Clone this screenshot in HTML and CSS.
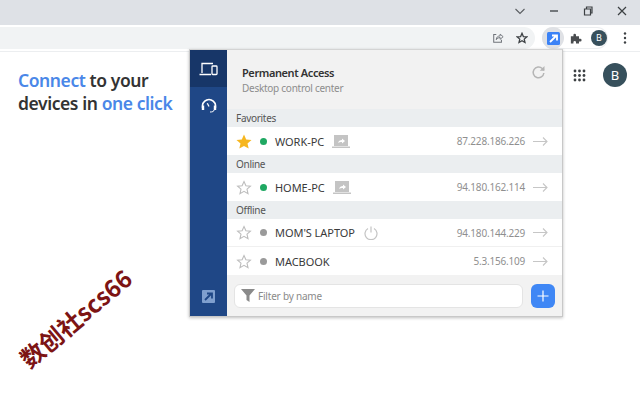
FILE: index.html
```html
<!DOCTYPE html>
<html lang="en">
<head>
<meta charset="utf-8">
<title>Permanent Access</title>
<link rel="stylesheet" href="styles.css">
</head>
<body>
<header class="titlebar">
  <svg class="win-icon" width="12" height="12" viewBox="0 0 12 12"><path d="M1.500 4 6 8.500 10.500 4" fill="none" stroke="#5a5d61" stroke-width="1.100"/></svg>
  <svg class="win-icon" width="12" height="12" viewBox="0 0 12 12"><path d="M2 6h8" fill="none" stroke="#3c4043" stroke-width="1.300"/></svg>
  <svg class="win-icon" width="12" height="12" viewBox="0 0 12 12"><path d="M2.500 4h6v6h-6zM4.500 4V2h5.500v6H8.500" fill="none" stroke="#3c4043" stroke-width="1.200"/></svg>
  <svg class="win-icon" width="12" height="12" viewBox="0 0 12 12"><path d="M2 2 10 10M10 2 2 10" fill="none" stroke="#3c4043" stroke-width="1.200"/></svg>
</header>
<nav class="toolbar">
  <div class="omnibox">
    <svg width="12" height="12" viewBox="0 0 14 14"><path d="M5 3H2v9h9V9" fill="none" stroke="#70747a" stroke-width="1.200"/><path d="M5 9c0-3 2-4.500 4.500-4.500V2.500L13 5.500 9.500 8.500V6.500C7.500 6.500 6 7.200 5 9z" fill="none" stroke="#70747a" stroke-width="1.100"/></svg>
    <svg width="12" height="12" viewBox="0 0 14 14"><path d="M7 1.500 8.600 5.300 12.700 5.600 9.600 8.300 10.500 12.300 7 10.200 3.500 12.300 4.400 8.300 1.300 5.600 5.400 5.300z" fill="none" stroke="#3c4043" stroke-width="1.500"/></svg>
  </div>
  <div class="ext-group">
    <span class="ext-active"><svg width="13" height="13" viewBox="0 0 13 13"><rect width="13" height="13" rx="1.500" fill="#3b82f6"/><path d="M3 10 9 4M5 3.500h5v5" fill="none" stroke="#fff" stroke-width="1.800"/></svg></span>
    <svg width="12" height="12" viewBox="0 0 14 14"><path d="M1 5h3V3.500a1.500 1.500 0 0 1 3 0V5h3.500v3H12a1.500 1.500 0 0 1 0 3h-1.500v2.500H7V12a1.500 1.500 0 0 0-3 0v1.500H1z" fill="#4a4d50"/></svg>
    <span class="avatar-small">B</span>
  </div>
  <svg class="kebab" width="4" height="12" viewBox="0 0 4 12"><circle cx="2" cy="1.500" r="1.200" fill="#3c4043"/><circle cx="2" cy="6" r="1.200" fill="#3c4043"/><circle cx="2" cy="10.500" r="1.200" fill="#3c4043"/></svg>
</nav>
<main class="page">
  <h1 class="promo"><span class="accent">Connect</span> to your<br>devices in <span class="accent">one click</span></h1>
  <div class="google-bar">
    <svg width="13" height="13" viewBox="0 0 13 13" fill="#3c4043"><circle cx="2" cy="2" r="1.400"/><circle cx="6.500" cy="2" r="1.400"/><circle cx="11" cy="2" r="1.400"/><circle cx="2" cy="6.500" r="1.400"/><circle cx="6.500" cy="6.500" r="1.400"/><circle cx="11" cy="6.500" r="1.400"/><circle cx="2" cy="11" r="1.400"/><circle cx="6.500" cy="11" r="1.400"/><circle cx="11" cy="11" r="1.400"/></svg>
    <span class="avatar-large">B</span>
  </div>
  <div class="watermark">数创社scs66</div>

  <section class="popup">
    <aside class="sidebar">
      <div class="tab tab-active">
        <svg width="19" height="14" viewBox="0 0 19 14"><path d="M3 11V1.500h11M.500 12.500H12" fill="none" stroke="#fff" stroke-width="1.300"/><rect x="13" y="4" width="5" height="8.500" rx=".8" fill="none" stroke="#fff" stroke-width="1.300"/></svg>
      </div>
      <div class="tab">
        <svg width="16" height="15" viewBox="0 0 16 15"><path d="M2.500 11.500A6.500 6.500 0 1 1 13.500 11.500" fill="none" stroke="#fff" stroke-width="1.700"/><path d="M.8 7.500h2.400v4.500H.8zM12.800 7.500h2.400v4.500h-2.400z" fill="#fff"/><path d="M8 8.500 6.300 5.300" stroke="#fff" stroke-width="1.300"/><path d="M5 6h.1M11 6h.1M8 4h.1" stroke="#fff" stroke-width="1.200"/><path d="M13 12c0 1.500-1.500 2-4 2" fill="none" stroke="#fff" stroke-width="1"/></svg>
      </div>
      <div class="sidebar-foot">
        <svg width="13" height="13" viewBox="0 0 13 13"><rect width="13" height="13" rx="1" fill="#7f9fce"/><path d="M3 10 9 4M5 3.500h5v5" fill="none" stroke="#1f4786" stroke-width="1.800"/></svg>
      </div>
    </aside>
    <div class="content">
      <div class="head">
        <div class="head-text">
          <div class="head-title">Permanent Access</div>
          <div class="head-sub">Desktop control center</div>
        </div>
        <svg width="15" height="15" viewBox="0 0 14 14"><path d="M12 7.500A5 5 0 1 1 10.500 3.300L12 4.800" fill="none" stroke="#b5b5b5" stroke-width="1.400"/><path d="M12.600 1v4.400H8.200z" fill="#b5b5b5"/></svg>
      </div>

      <div class="group">Favorites</div>
      <div class="row">
        <svg class="star" width="16" height="15" viewBox="0 0 16 15"><path d="M8 .5 10.200 5.400 15.500 5.900 11.500 9.400 12.700 14.500 8 11.900 3.300 14.500 4.500 9.400.5 5.900 5.800 5.400z" fill="#f6b61f"/></svg>
        <i class="dot on"></i>
        <span class="name">WORK-PC</span>
        <svg class="laptop" width="18" height="13" viewBox="0 0 18 13"><path d="M2 0h14v11H2z" fill="#c4c4c4"/><path d="M0 11.500h18V13H0z" fill="#c4c4c4"/><path d="M6 8c.5-2 2-3 4-3V3.500L13 6 10 8.500V7C8.500 7 7 7 6 8z" fill="#fff"/></svg>
        <span class="ip">87.228.186.226</span>
        <svg class="arrow" width="15" height="9" viewBox="0 0 15 9"><path d="M0 4.500h14M10 .5l4 4-4 4" fill="none" stroke="#c6c6c6" stroke-width="1.100"/></svg>
      </div>

      <div class="group">Online</div>
      <div class="row">
        <svg class="star" width="16" height="15" viewBox="0 0 16 15"><path d="M8 1.500 9.900 5.800 14.400 6.200 11 9.200 12 13.700 8 11.300 4 13.700 5 9.200 1.600 6.200 6.100 5.800z" fill="none" stroke="#bdbdbd" stroke-width="1.100"/></svg>
        <i class="dot on"></i>
        <span class="name">HOME-PC</span>
        <svg class="laptop" width="18" height="13" viewBox="0 0 18 13"><path d="M2 0h14v11H2z" fill="#c4c4c4"/><path d="M0 11.500h18V13H0z" fill="#c4c4c4"/><path d="M6 8c.5-2 2-3 4-3V3.500L13 6 10 8.500V7C8.500 7 7 7 6 8z" fill="#fff"/></svg>
        <span class="ip">94.180.162.114</span>
        <svg class="arrow" width="15" height="9" viewBox="0 0 15 9"><path d="M0 4.500h14M10 .5l4 4-4 4" fill="none" stroke="#c6c6c6" stroke-width="1.100"/></svg>
      </div>

      <div class="group">Offline</div>
      <div class="row row-rule">
        <svg class="star" width="16" height="15" viewBox="0 0 16 15"><path d="M8 1.500 9.900 5.800 14.400 6.200 11 9.200 12 13.700 8 11.300 4 13.700 5 9.200 1.600 6.200 6.100 5.800z" fill="none" stroke="#bdbdbd" stroke-width="1.100"/></svg>
        <i class="dot off"></i>
        <span class="name">MOM'S LAPTOP</span>
        <svg class="power" width="14" height="14" viewBox="0 0 14 14"><path d="M4 2.500a6 6 0 1 0 6 0M7 .5v6" fill="none" stroke="#c4c4c4" stroke-width="1.200"/></svg>
        <span class="ip">94.180.144.229</span>
        <svg class="arrow" width="15" height="9" viewBox="0 0 15 9"><path d="M0 4.500h14M10 .5l4 4-4 4" fill="none" stroke="#c6c6c6" stroke-width="1.100"/></svg>
      </div>
      <div class="row">
        <svg class="star" width="16" height="15" viewBox="0 0 16 15"><path d="M8 1.500 9.900 5.800 14.400 6.200 11 9.200 12 13.700 8 11.300 4 13.700 5 9.200 1.600 6.200 6.100 5.800z" fill="none" stroke="#bdbdbd" stroke-width="1.100"/></svg>
        <i class="dot off"></i>
        <span class="name">MACBOOK</span>
        <span class="ip">5.3.156.109</span>
        <svg class="arrow" width="15" height="9" viewBox="0 0 15 9"><path d="M0 4.500h14M10 .5l4 4-4 4" fill="none" stroke="#c6c6c6" stroke-width="1.100"/></svg>
      </div>

      <div class="foot">
        <div class="filter">
          <svg width="14" height="13" viewBox="0 0 14 13"><path d="M0 0h14L8.500 6.500V13L5.500 11V6.500z" fill="#8a8a8a"/></svg>
          <span>Filter by name</span>
        </div>
        <div class="add"><svg width="12" height="12" viewBox="0 0 12 12"><path d="M6 .5v11M.5 6h11" stroke="#fff" stroke-width="1.200"/></svg></div>
      </div>
    </div>
  </section>
</main>
</body>
</html>
```
FILE: styles.css
```css
* { box-sizing: border-box; }
html, body { margin: 0; height: 400px; overflow: hidden; }
body { background: #fff; font-family: "Noto Sans", "Open Sans", sans-serif; color: #333; display: flex; flex-direction: column; }

.titlebar { height: 25px; background: #dee1e6; display: flex; align-items: center; justify-content: flex-end; gap: 22px; padding: 0 12px 0 0; flex: none; }
.win-icon { display: block; margin-top: -3px; }

.toolbar { height: 27px; background: #fff; border-bottom: 1px solid #eceef0; display: flex; align-items: center; flex: none; position: relative; }
.omnibox { width: 535px; height: 22px; background: #f1f3f4; border-radius: 0 11px 11px 0; display: flex; align-items: center; justify-content: flex-end; gap: 12px; padding-right: 7px; }
.ext-group { margin-left: 7px; width: 66px; height: 22px; border: 1px solid #eceef0; border-left: 0; border-radius: 11px; display: flex; align-items: center; gap: 6px; }
.ext-active { width: 22px; height: 22px; border-radius: 50%; background: #dfe1e5; display: flex; align-items: center; justify-content: center; flex: none; }
.avatar-small { width: 16px; height: 16px; border-radius: 50%; background: #37505c; color: #fff; font-size: 9px; line-height: 16px; text-align: center; margin-left: 3px; }
.kebab { margin-left: 15px; }

.page { flex: 1; position: relative; }
.promo { position: absolute; left: 18px; top: 17px; margin: 0; font-size: 17.500px; line-height: 23px; font-weight: 600; color: #333; letter-spacing: -0.42px; white-space: nowrap; }
.accent { color: #4a87e8; }
.google-bar { position: absolute; left: 573px; top: 11px; display: flex; align-items: center; gap: 17px; }
.avatar-large { width: 24px; height: 24px; border-radius: 50%; background: #37505c; color: #fff; font-size: 13px; line-height: 24px; text-align: center; }
.watermark { position: absolute; left: 7px; top: 252px; font-family: "Noto Sans CJK SC", "Liberation Sans", sans-serif; font-size: 24px; font-weight: 700; line-height: 28px; color: #7d1414; white-space: nowrap; transform: rotate(-40deg); }

.popup { position: absolute; left: 189px; top: -3px; width: 374px; height: 268px; display: flex; background: #fff; border: 1px solid #c8c8c8; border-top-color: #d4d4d4; box-shadow: 0 1px 3px rgba(0,0,0,.25); }
.sidebar { width: 37px; background: #1f4786; display: flex; flex-direction: column; flex: none; }
.tab { height: 37px; display: flex; align-items: center; justify-content: center; flex: none; }
.tab-active { background: #173668; }
.sidebar-foot { margin-top: auto; height: 39px; display: flex; align-items: center; justify-content: center; }

.content { flex: 1; display: flex; flex-direction: column; min-width: 0; background: #f2f2f2; }
.head { height: 59px; display: flex; justify-content: space-between; align-items: flex-start; padding: 15px 16px 0 15px; }
.head-title { font-size: 11px; line-height: 15px; font-weight: 600; color: #333; letter-spacing: -0.4px; }
.head-sub { font-size: 10px; line-height: 14px; color: #8d8d8d; margin-top: 1px; letter-spacing: -0.27px; }
.group { height: 18px; background: #ebeef0; font-size: 10px; line-height: 18px; color: #555; padding-left: 9px; flex: none; letter-spacing: -0.3px; }
.row { height: 28px; background: #fff; display: flex; align-items: center; padding: 0 14px 0 9px; flex: none; }
.row-rule { border-bottom: 1px solid #f0f0f0; }
.star { flex: none; }
.dot { width: 7px; height: 7px; border-radius: 50%; margin: 0 8px 0 8px; flex: none; }
.on { background: #1fa862; }
.off { background: #9a9a9a; }
.name { font-size: 11px; color: #3a3a3a; letter-spacing: -0.05px; }
.laptop { margin-left: 8px; }
.power { margin-left: 9px; }
.ip { margin-left: auto; font-size: 10px; color: #8f8f8f; letter-spacing: -0.2px; }
.arrow { margin-left: 8px; }
.foot { flex: 1; display: flex; align-items: center; gap: 8px; padding: 0 7px; }
.filter { flex: 1; height: 24px; background: #fff; border: 1px solid #e4e4e4; border-radius: 6px; display: flex; align-items: center; gap: 3px; padding-left: 6px; font-size: 10px; color: #8a8a8a; letter-spacing: -0.2px; }
.add { width: 24px; height: 24px; background: #3f87f5; border-radius: 6px; display: flex; align-items: center; justify-content: center; flex: none; }
```
